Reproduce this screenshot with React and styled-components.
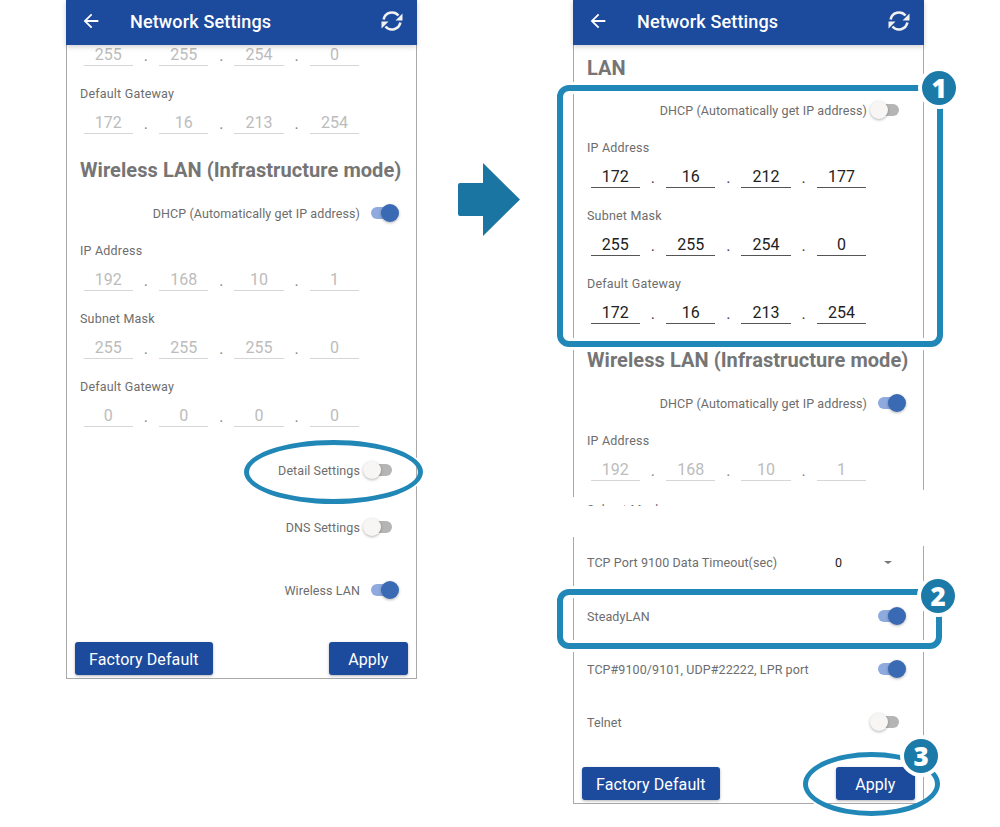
import React from "react"
import styled, { createGlobalStyle } from "styled-components"
import { MdArrowBack } from "react-icons/md"

const GlobalStyle = createGlobalStyle`
  html, body { margin: 0; padding: 0; background: #fff; }
  body { font-family: Roboto, "Liberation Sans", sans-serif; }
`

const Stage = styled.div`
  position: relative;
  width: 1000px;
  height: 827px;
  padding-left: 66px;
  box-sizing: border-box;
  display: flex;
  align-items: flex-start;
  overflow: hidden;
`

const Phone = styled.div`
  position: relative;
  width: 351px;
  height: ${p => p.$height}px;
  box-sizing: border-box;
  border: 1px solid #a9a9a9;
  border-top: none;
  display: flex;
  flex-direction: column;
  flex: none;
`

const Header = styled.header`
  position: relative;
  z-index: 2;
  flex: none;
  height: 45px;
  margin: 0 -1px;
  padding: 0 14px 3px 14px;
  box-sizing: border-box;
  background: #1c4a9c;
  box-shadow: 0 2px 5px rgba(0, 0, 0, 0.18);
  color: #fff;
  display: flex;
  align-items: center;
`

const BackButton = styled.span`
  display: flex;
  width: 50px;
  flex: none;
`

const Title = styled.h1`
  flex: 1;
  margin: 0;
  font-size: 18px;
  font-weight: 500;
  letter-spacing: 0.15px;
`

const Body = styled.div`
  flex: 1;
  min-height: 0;
  padding: 0 13px;
  overflow: hidden;
`

const Heading = styled.h2`
  margin: 0;
  height: ${p => p.$height || 46}px;
  box-sizing: border-box;
  display: flex;
  align-items: center;
  font-size: 20px;
  font-weight: 700;
  letter-spacing: 0.06px;
  color: #757575;
  white-space: nowrap;
`

const FieldGroup = styled.div`
  margin-bottom: 13px;
`

const FieldLabel = styled.div`
  height: 28px;
  line-height: 30px;
  font-size: 12.5px;
  letter-spacing: 0.2px;
  color: #6d6d6d;
`

const OctetRow = styled.div`
  height: 27px;
  padding-left: 3.5px;
  display: flex;
  margin-top: ${p => p.$clip || 0}px;
`

const Octet = styled.div`
  width: 49.5px;
  height: 27px;
  box-sizing: border-box;
  flex: none;
  text-align: center;
  font-size: 16px;
  line-height: 32px;
  color: ${p => (p.$active ? "#222" : "#bcbcbc")};
  border-bottom: 1px solid ${p => (p.$active ? "#555" : "#d6d6d6")};
`

const OctetDot = styled.span`
  width: 25.9px;
  flex: none;
  text-align: center;
  font-size: 16px;
  line-height: 33px;
  color: ${p => (p.$active ? "#444" : "#888")};
`

const ToggleRow = styled.div`
  height: 40px;
  margin-top: ${p => p.$top || 0}px;
  display: flex;
  align-items: center;
  justify-content: ${p => (p.$spread ? "space-between" : "flex-end")};
  gap: 3px;
  padding-right: 4px;
  font-size: 12.5px;
  letter-spacing: 0.09px;
  color: #6d6d6d;
`

const Switch = styled.span`
  position: relative;
  display: block;
  width: 36px;
  height: 20px;
  flex: none;
  &::before {
    content: "";
    position: absolute;
    left: 8px;
    top: 4px;
    width: 21px;
    height: 12px;
    border-radius: 6px;
    background: ${p => (p.$on ? "#8eaadf" : "#b5b5b5")};
  }
  &::after {
    content: "";
    position: absolute;
    left: ${p => (p.$on ? 18 : 0)}px;
    top: 1px;
    width: 18px;
    height: 18px;
    border-radius: 50%;
    background: ${p => (p.$on ? "#3a6ab4" : "#f7f6f5")};
    box-shadow: 0 1px 3px rgba(0, 0, 0, 0.3);
  }
`

const Spacer = styled.div`
  height: 3px;
`

const TearBand = styled.div`
  height: 48px;
  padding-top: 1px;
  box-sizing: border-box;
`

const TearClip = styled.div`
  height: 11px;
  overflow: hidden;
`

const SelectValue = styled.div`
  width: 71px;
  padding-right: 14px;
  box-sizing: border-box;
  display: flex;
  justify-content: space-between;
  align-items: center;
  color: #222;
  font-size: 12.5px;
  &::after {
    content: "";
    border-left: 4px solid transparent;
    border-right: 4px solid transparent;
    border-top: 3px solid #757575;
  }
`

const BorderGap = styled.span`
  position: absolute;
  z-index: 1;
  top: ${p => p.$top}px;
  height: ${p => p.$h}px;
  ${p => p.$side}: -1px;
  width: 2px;
  background: #fff;
`

const Footer = styled.footer`
  flex: none;
  display: flex;
  justify-content: space-between;
  padding: 0 8px 3px;
`

const Button = styled.button`
  height: 33px;
  padding: 1px ${p => (p.$wide ? 19.5 : 14)}px 0;
  border: none;
  border-radius: 3px;
  background: #1c4a9c;
  color: #fff;
  font-family: inherit;
  font-size: 16px;
  letter-spacing: 0.1px;
  box-shadow: 0 1px 3px rgba(0, 0, 0, 0.3);
`

const ArrowGap = styled.div`
  width: 156px;
  flex: none;
  padding: 163px 0 0 41px;
  box-sizing: border-box;
`

const Highlight = styled.div`
  position: absolute;
  left: 557px;
  top: ${p => p.$top}px;
  width: ${p => p.$width}px;
  height: ${p => p.$height}px;
  box-sizing: border-box;
  border: 6px solid #2187b6;
  border-radius: 12px;
  box-shadow: 0 0 0 3px #fff, inset 0 0 0 3px #fff;
`

const Ring = styled.div`
  position: absolute;
  left: ${p => p.$left}px;
  top: ${p => p.$top}px;
  width: ${p => p.$width}px;
  height: ${p => p.$height}px;
  box-sizing: border-box;
  border: 5px solid #2187b6;
  border-radius: 50%;
  box-shadow: 0 0 0 2px #fff;
`

const Badge = styled.div`
  position: absolute;
  left: ${p => p.$x - 17}px;
  top: ${p => p.$y - 17}px;
  width: 34px;
  height: 34px;
  border-radius: 50%;
  background: #1b7aa8;
  box-shadow: 0 0 0 4px #fff;
  color: #fff;
  font-family: "Open Sans", sans-serif;
  font-size: 26px;
  font-weight: 800;
  display: flex;
  align-items: center;
  justify-content: center;
`

const Octets = ({ values, active, clip }) => (
  <OctetRow $clip={clip}>
    {values.map((v, i) => (
      <React.Fragment key={i}>
        {i > 0 && <OctetDot $active={active}>.</OctetDot>}
        <Octet $active={active}>{v}</Octet>
      </React.Fragment>
    ))}
  </OctetRow>
)

const IpField = ({ label, values, active }) => (
  <FieldGroup>
    <FieldLabel>{label}</FieldLabel>
    <Octets values={values} active={active} />
  </FieldGroup>
)

const Toggle = ({ label, on, top, spread }) => (
  <ToggleRow $top={top} $spread={spread}>
    <span>{label}</span>
    <Switch $on={on} />
  </ToggleRow>
)

const RefreshIcon = () => (
  <svg width="22" height="22" viewBox="0 0 22 22" fill="none">
    <path
      d="M2.6 9.5A8.6 8.6 0 0 1 17.5 5.5M19.4 12.5A8.6 8.6 0 0 1 4.5 16.5"
      stroke="#f1f1f1"
      strokeWidth="2.6"
    />
    <path d="M21.5 3.5V10.5H14.5ZM0.5 18.5V11.5H7.5Z" fill="#f1f1f1" />
  </svg>
)

const AppBar = () => (
  <Header>
    <BackButton>
      <MdArrowBack size={22} />
    </BackButton>
    <Title>Network Settings</Title>
    <RefreshIcon />
  </Header>
)

const Actions = () => (
  <Footer>
    <Button>Factory Default</Button>
    <Button $wide>Apply</Button>
  </Footer>
)

const DHCP = "DHCP (Automatically get IP address)"

export default function App() {
  return (
    <Stage>
      <GlobalStyle />
      <Phone $height={679}>
        <AppBar />
        <Body>
          <FieldGroup>
            <Octets values={[255, 255, 254, 0]} clip={-6} />
          </FieldGroup>
          <IpField label="Default Gateway" values={[172, 16, 213, 254]} />
          <Heading>Wireless LAN (Infrastructure mode)</Heading>
          <Toggle label={DHCP} on />
          <Spacer />
          <IpField label="IP Address" values={[192, 168, 10, 1]} />
          <IpField label="Subnet Mask" values={[255, 255, 255, 0]} />
          <IpField label="Default Gateway" values={[0, 0, 0, 0]} />
          <Toggle label="Detail Settings" top={23} />
          <Toggle label="DNS Settings" top={17} />
          <Toggle label="Wireless LAN" on top={23} />
        </Body>
        <Actions />
      </Phone>

      <ArrowGap>
        <svg width="62" height="73" viewBox="0 0 62 73">
          <path
            d="M25 0 L62 36.5 L25 73 L25 53 H2 a2 2 0 0 1 -2 -2 V22 a2 2 0 0 1 2 -2 H25 Z"
            fill="#1b75a3"
          />
        </svg>
      </ArrowGap>

      <Phone $height={804}>
        <AppBar />
        <Body>
          <Heading $height={45}>LAN</Heading>
          <Toggle label={DHCP} />
          <Spacer />
          <IpField label="IP Address" values={[172, 16, 212, 177]} active />
          <IpField label="Subnet Mask" values={[255, 255, 254, 0]} active />
          <IpField label="Default Gateway" values={[172, 16, 213, 254]} active />
          <Heading>Wireless LAN (Infrastructure mode)</Heading>
          <Toggle label={DHCP} on />
          <Spacer />
          <IpField label="IP Address" values={[192, 168, 10, 1]} />
          <TearBand>
            <TearClip>
              <FieldLabel>Subnet Mask</FieldLabel>
            </TearClip>
          </TearBand>
          <ToggleRow $spread>
            <span>TCP Port 9100 Data Timeout(sec)</span>
            <SelectValue>0</SelectValue>
          </ToggleRow>
          <Toggle label="SteadyLAN" on top={14} spread />
          <Toggle label="TCP#9100/9101, UDP#22222, LPR port" on top={13} spread />
          <Toggle label="Telnet" top={13} spread />
        </Body>
        <Actions />
        <BorderGap $side="left" $top={497} $h={40} />
        <BorderGap $side="right" $top={490} $h={56} />
      </Phone>

      <Ring $left={244} $top={440} $width={179} $height={64} />
      <Highlight $top={85} $width={386} $height={262} />
      <Badge $x={939} $y={88}>1</Badge>
      <Highlight $top={589} $width={385} $height={60} />
      <Badge $x={938} $y={596}>2</Badge>
      <Ring $left={803} $top={752} $width={137} $height={64} />
      <Badge $x={921} $y={756}>3</Badge>
    </Stage>
  )
}
